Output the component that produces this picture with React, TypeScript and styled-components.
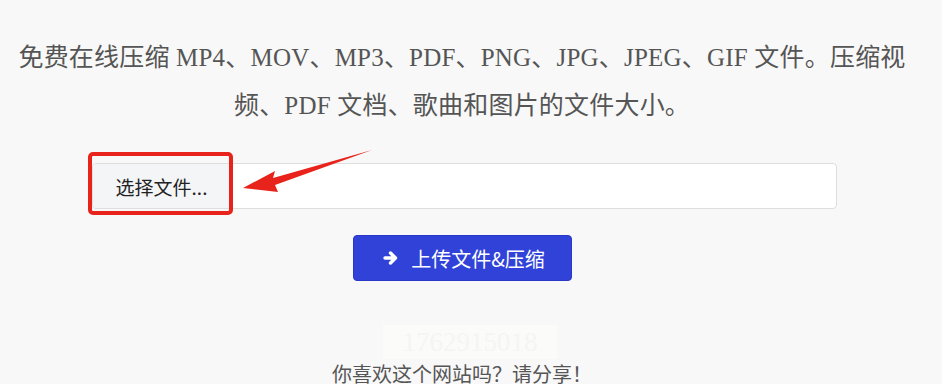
import React from "react";
import styled, { createGlobalStyle } from "styled-components";

const GlobalStyle = createGlobalStyle`
  html, body {
    margin: 0;
    padding: 0;
    background: #f8f8f8;
  }
  body {
    font-family: "Liberation Serif", "Noto Sans CJK SC", serif;
  }
`;

const Page = styled.main`
  padding: 34px 24px 0 6px;
  text-align: center;
  height: 384px;
  box-sizing: border-box;
  overflow: hidden;
`;

const Description = styled.p`
  margin: 0;
  font-family: "Liberation Serif", "Noto Sans CJK SC", serif;
  font-size: 25px;
  line-height: 48px;
  letter-spacing: 0.2px;
  color: #555;
`;

const FileGroup = styled.div`
  position: relative;
  margin: 33px 0 0 86px;
  width: 745px;
  height: 46px;
  display: flex;
  box-sizing: border-box;
  border: 1px solid #dedede;
  border-radius: 4px;
  background: #fff;
`;

const ChooseButton = styled.div`
  width: 137px;
  display: flex;
  align-items: center;
  justify-content: center;
  background: #f4f5f7;
  border-right: 1px solid #dedede;
  border-radius: 4px 0 0 4px;
  font-family: "Noto Sans CJK SC", "Liberation Sans", sans-serif;
  font-size: 19px;
  color: #222;
`;

const Highlight = styled.div`
  position: absolute;
  left: -5px;
  top: -12px;
  width: 145px;
  height: 63px;
  box-sizing: border-box;
  border: 4px solid #e8231c;
  border-radius: 5px;
  pointer-events: none;
`;

const Arrow = styled.svg`
  position: absolute;
  left: 150px;
  top: -14px;
  overflow: visible;
`;

const UploadButton = styled.button`
  display: flex;
  align-items: center;
  justify-content: center;
  gap: 13px;
  margin: 26px auto 0;
  padding: 0 0 0 4px;
  width: 219px;
  height: 46px;
  border: 1px solid #2a38c8;
  border-radius: 4px;
  background: #3142d9;
  color: #fff;
  font-family: "Noto Sans CJK SC", "Liberation Sans", sans-serif;
  font-size: 20px;
  cursor: pointer;
`;

const Watermark = styled.div`
  margin: 44px auto 0;
  width: 174px;
  height: 34px;
  background: #fbfbfa;
  font-family: "Liberation Serif", serif;
  font-size: 27px;
  line-height: 34px;
  color: #f5f5f3;
  transform: translateX(8px);
`;

const ShareText = styled.p`
  margin: 2px 0 0;
  font-family: "Noto Sans CJK SC", "Liberation Sans", sans-serif;
  font-size: 20px;
  line-height: 26px;
  color: #555;
`;

function ArrowRightIcon() {
  return (
    <svg
      width="15"
      height="14"
      viewBox="0 0 15 14"
      fill="none"
      stroke="#fff"
      strokeWidth="3.4"
      strokeLinecap="round"
      strokeLinejoin="round"
    >
      <path d="M2 7h10.5M7.5 2l5 5-5 5" />
    </svg>
  );
}

function App() {
  return (
    <>
      <GlobalStyle />
      <Page>
        <Description>
          免费在线压缩 MP4、MOV、MP3、PDF、PNG、JPG、JPEG、GIF 文件。压缩视频、PDF 文档、歌曲和图片的文件大小。
        </Description>

        <FileGroup>
          <ChooseButton>选择文件...</ChooseButton>
          <Highlight />
          <Arrow width="130" height="42" viewBox="0 0 130 42">
            <path
              d="M129 0 L30 28 L32 21 L0 38 L35 42 L32 35 Z"
              fill="#e8231c"
            />
          </Arrow>
        </FileGroup>

        <UploadButton>
          <ArrowRightIcon />
          上传文件&amp;压缩
        </UploadButton>

        <Watermark>1762915018</Watermark>
        <ShareText>你喜欢这个网站吗？请分享！</ShareText>
      </Page>
    </>
  );
}

export default App;
